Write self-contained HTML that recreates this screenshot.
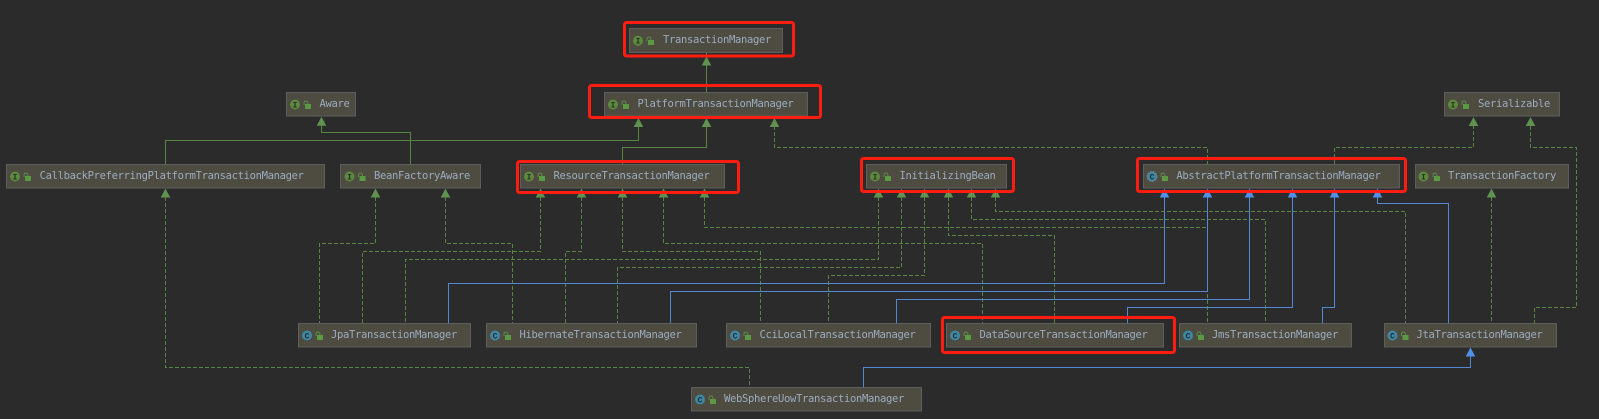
<!DOCTYPE html>
<html><head><meta charset="utf-8"><style>
html,body{margin:0;padding:0;background:#2b2b2b;width:1599px;height:419px;overflow:hidden}
svg{display:block;filter:blur(.3px)}
.b{fill:#4e4b40;stroke:#5e5e5c;stroke-width:1}
text.t{font-family:"DejaVu Sans Mono","Liberation Mono",monospace;font-size:10.5px;letter-spacing:-.32px;fill:#9cacc2}
text.k{font-family:"Liberation Mono",monospace;font-size:8px;font-weight:bold;fill:#2b2b2b;text-anchor:middle}
.g,.gd,.bl{fill:none;stroke-width:1}
.g{stroke:#578544}
.gd{stroke:#578544;stroke-dasharray:4 2}
.bl{stroke:#5389d2}
.ag{fill:#5f9150}
.ab{fill:#4f8fe8}
.r{fill:none;stroke:#ff1c10;stroke-width:3}
.lk{fill:#5b9a42}
.sh{fill:none;stroke:#5b8a4a;stroke-width:1}
</style></head><body>
<svg width="1599" height="419" viewBox="0 0 1599 419" xmlns="http://www.w3.org/2000/svg">
<rect width="1599" height="419" fill="#2b2b2b"/>
<defs>
<g id="ag"><polygon class="ag" points="0,0 4.8,9 -4.8,9"/></g>
<g id="ab"><polygon class="ab" points="0,0 4.8,9 -4.8,9"/></g>
<g id="lk"><rect class="lk" x="-2" y="-1" width="6" height="5"/><path class="sh" d="M-3,0 V-2 Q-3,-4 -1,-4 Q1,-4 1,-1"/></g>
</defs>

<!-- solid green -->
<path class="g" d="M706.5,52V92"/>
<path class="g" d="M321.5,125V132.5H410.5V164"/>
<path class="g" d="M165.5,164V140.5H638.5V126"/>
<path class="g" d="M622.5,164V147.5H706.5V126"/>
<!-- dashed green -->
<path class="gd" d="M774.5,126V147.5H1207.5V164"/>
<path class="gd" d="M1334.5,164V147.5H1473.5V126"/>
<path class="gd" d="M1530.5,126V147.5H1576.5V307.5H1534.5V323"/>
<path class="gd" d="M165.5,197V367.5H749.5V387"/>
<path class="gd" d="M375.5,197V243.5H319.5V323"/>
<path class="gd" d="M445.5,197V243.5H512.5V323"/>
<path class="gd" d="M540.5,197V251.5H362.5V323"/>
<path class="gd" d="M581.5,197V251.5H565.5V323"/>
<path class="gd" d="M622.5,197V251.5H760.5V323"/>
<path class="gd" d="M663.5,197V243.5H982.5V323"/>
<path class="gd" d="M704.5,197V227.5H1207.5V323"/>
<path class="gd" d="M878.5,197V259.5H405.5V323"/>
<path class="gd" d="M901.5,197V267.5H617.5V323"/>
<path class="gd" d="M924.5,197V275.5H828.5V323"/>
<path class="gd" d="M948.5,197V235.5H1054.5V323"/>
<path class="gd" d="M971.5,197V219.5H1265.5V323"/>
<path class="gd" d="M995.5,197V211.5H1405.5V323"/>
<path class="gd" d="M1491.5,197V323"/>
<!-- blue -->
<path class="bl" d="M1164.5,197V283.5H448.5V323"/>
<path class="bl" d="M1207.5,197V291.5H670.5V323"/>
<path class="bl" d="M1249.5,197V299.5H896.5V323"/>
<path class="bl" d="M1292.5,197V307.5H1127.5V323"/>
<path class="bl" d="M1334.5,197V307.5H1322.5V323"/>
<path class="bl" d="M1377.5,197V203.5H1448.5V323"/>
<path class="bl" d="M863.5,387V367.5H1470.5V356"/>

<!-- arrows -->
<use href="#ag" x="706.5" y="56.5"/>
<use href="#ag" x="321.5" y="116.7"/>
<use href="#ag" x="638.5" y="118"/>
<use href="#ag" x="706.5" y="118"/>
<use href="#ag" x="774.5" y="118"/>
<use href="#ag" x="1473.5" y="117"/>
<use href="#ag" x="1530.5" y="117"/>
<use href="#ag" x="165.5" y="188.5"/>
<use href="#ag" x="375.5" y="188.5"/>
<use href="#ag" x="445.5" y="188.5"/>
<use href="#ag" x="540.5" y="188.5"/>
<use href="#ag" x="581.5" y="188.5"/>
<use href="#ag" x="622.5" y="188.5"/>
<use href="#ag" x="663.5" y="188.5"/>
<use href="#ag" x="704.5" y="188.5"/>
<use href="#ag" x="878.5" y="188.5"/>
<use href="#ag" x="901.5" y="188.5"/>
<use href="#ag" x="924.5" y="188.5"/>
<use href="#ag" x="948.5" y="188.5"/>
<use href="#ag" x="971.5" y="188.5"/>
<use href="#ag" x="995.5" y="188.5"/>
<use href="#ag" x="1491.5" y="188.5"/>
<use href="#ab" x="1164.5" y="188.5"/>
<use href="#ab" x="1207.5" y="188.5"/>
<use href="#ab" x="1249.5" y="188.5"/>
<use href="#ab" x="1292.5" y="188.5"/>
<use href="#ab" x="1334.5" y="188.5"/>
<use href="#ab" x="1377.5" y="188.5"/>
<use href="#ab" x="1470.5" y="347.5"/>

<!-- boxes: interfaces -->
<g>
<rect class="b" x="629.5" y="28.5" width="153" height="24"/>
<circle cx="638" cy="40.7" r="5" fill="#5b8a3c"/><text class="k" x="638" y="43.5">I</text><use href="#lk" x="650" y="41"/>
<text class="t" x="663" y="43.2">TransactionManager</text>

<rect class="b" x="286.5" y="92.5" width="69" height="23.5"/>
<circle cx="295" cy="104.5" r="5" fill="#5b8a3c"/><text class="k" x="295" y="107.3">I</text><use href="#lk" x="307" y="105"/>
<text class="t" x="319.5" y="107">Aware</text>

<rect class="b" x="604.5" y="92.5" width="203" height="23.5"/>
<circle cx="613" cy="104.5" r="5" fill="#5b8a3c"/><text class="k" x="613" y="107.3">I</text><use href="#lk" x="625" y="105"/>
<text class="t" x="637.5" y="107">PlatformTransactionManager</text>

<rect class="b" x="1444.5" y="92.5" width="115" height="23.5"/>
<circle cx="1453" cy="104.5" r="5" fill="#5b8a3c"/><text class="k" x="1453" y="107.3">I</text><use href="#lk" x="1465" y="105"/>
<text class="t" x="1478" y="107">Serializable</text>

<rect class="b" x="6.5" y="164.5" width="318" height="23.5"/>
<circle cx="15" cy="176.5" r="5" fill="#5b8a3c"/><text class="k" x="15" y="179.3">I</text><use href="#lk" x="27" y="177"/>
<text class="t" x="39.6" y="179">CallbackPreferringPlatformTransactionManager</text>

<rect class="b" x="340.5" y="164.5" width="140" height="23.5"/>
<circle cx="349.5" cy="176.5" r="5" fill="#5b8a3c"/><text class="k" x="349.5" y="179.3">I</text><use href="#lk" x="361.5" y="177"/>
<text class="t" x="374" y="179">BeanFactoryAware</text>

<rect class="b" x="520.5" y="164.5" width="204" height="23.5"/>
<circle cx="529" cy="176.5" r="5" fill="#5b8a3c"/><text class="k" x="529" y="179.3">I</text><use href="#lk" x="541" y="177"/>
<text class="t" x="553.5" y="179">ResourceTransactionManager</text>

<rect class="b" x="866.5" y="164.5" width="140" height="23.5"/>
<circle cx="875" cy="176.5" r="5" fill="#5b8a3c"/><text class="k" x="875" y="179.3">I</text><use href="#lk" x="887" y="177"/>
<text class="t" x="899.5" y="179">InitializingBean</text>

<rect class="b" x="1143.5" y="164.5" width="256" height="23.5"/>
<circle cx="1152" cy="176.5" r="5" fill="#3d88a5" stroke="#6e7f85" stroke-dasharray="2 1"/><text class="k" x="1152" y="179.3">C</text><use href="#lk" x="1164" y="177"/>
<text class="t" x="1176.4" y="179">AbstractPlatformTransactionManager</text>

<rect class="b" x="1415.5" y="164.5" width="153" height="23.5"/>
<circle cx="1423.5" cy="176.5" r="5" fill="#5b8a3c"/><text class="k" x="1423.5" y="179.3">I</text><use href="#lk" x="1436" y="177"/>
<text class="t" x="1448" y="179">TransactionFactory</text>
</g>

<!-- boxes: classes -->
<g>
<rect class="b" x="298.5" y="323.5" width="172" height="23.5"/>
<circle cx="307" cy="335.5" r="5" fill="#3d88a5"/><text class="k" x="307" y="338.3">C</text><use href="#lk" x="319" y="336"/>
<text class="t" x="331" y="338">JpaTransactionManager</text>

<rect class="b" x="486.5" y="323.5" width="210" height="23.5"/>
<circle cx="495" cy="335.5" r="5" fill="#3d88a5"/><text class="k" x="495" y="338.3">C</text><use href="#lk" x="507" y="336"/>
<text class="t" x="519.5" y="338">HibernateTransactionManager</text>

<rect class="b" x="726.5" y="323.5" width="204" height="23.5"/>
<circle cx="735" cy="335.5" r="5" fill="#3d88a5"/><text class="k" x="735" y="338.3">C</text><use href="#lk" x="747" y="336"/>
<text class="t" x="759.5" y="338">CciLocalTransactionManager</text>

<rect class="b" x="946.5" y="323.5" width="217" height="23.5"/>
<circle cx="955" cy="335.5" r="5" fill="#3d88a5"/><text class="k" x="955" y="338.3">C</text><use href="#lk" x="967" y="336"/>
<text class="t" x="979.5" y="338">DataSourceTransactionManager</text>

<rect class="b" x="1179.5" y="323.5" width="172" height="23.5"/>
<circle cx="1188" cy="335.5" r="5" fill="#3d88a5"/><text class="k" x="1188" y="338.3">C</text><use href="#lk" x="1200" y="336"/>
<text class="t" x="1212" y="338">JmsTransactionManager</text>

<rect class="b" x="1384.5" y="323.5" width="172" height="23.5"/>
<circle cx="1392.5" cy="335.5" r="5" fill="#3d88a5"/><text class="k" x="1392.5" y="338.3">C</text><use href="#lk" x="1404.5" y="336"/>
<text class="t" x="1416.5" y="338">JtaTransactionManager</text>

<rect class="b" x="691.5" y="387.5" width="230" height="23.5"/>
<circle cx="700" cy="399.5" r="5" fill="#3d88a5"/><text class="k" x="700" y="402.3">C</text><use href="#lk" x="712" y="400"/>
<text class="t" x="724" y="402">WebSphereUowTransactionManager</text>
</g>

<!-- red highlights -->
<rect class="r" x="624.5" y="22.5" width="169" height="33.5" rx="2"/>
<rect class="r" x="589.5" y="85.5" width="231" height="32" rx="2"/>
<rect class="r" x="517.5" y="161.5" width="221" height="31" rx="2"/>
<rect class="r" x="861.5" y="158.5" width="152" height="33" rx="2"/>
<rect class="r" x="1137.5" y="158.5" width="268" height="33" rx="2"/>
<rect class="r" x="942.5" y="317.5" width="232" height="35" rx="2"/>
</svg>
</body></html>
